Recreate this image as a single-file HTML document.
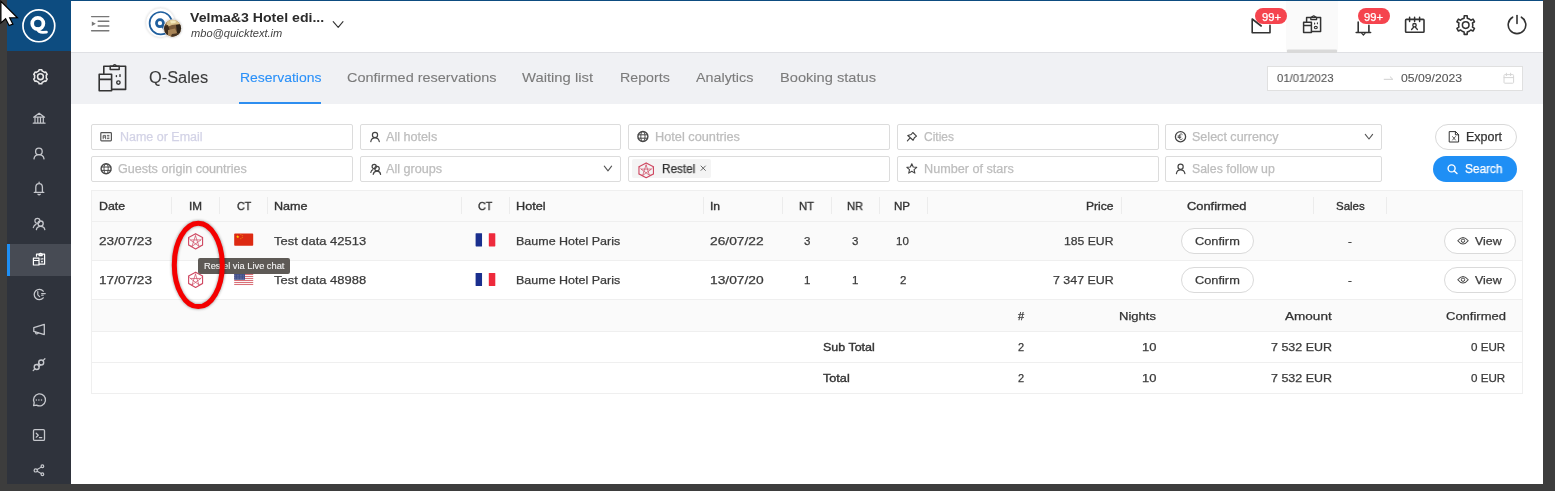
<!DOCTYPE html>
<html><head><meta charset="utf-8">
<style>
*{box-sizing:border-box;margin:0;padding:0}
html,body{width:1555px;height:491px;overflow:hidden}
body{position:relative;background:#3d3d3d;font-family:"Liberation Sans",sans-serif;color:#333}
.a{position:absolute}
.t{position:absolute;white-space:pre;line-height:1;will-change:transform}
svg{position:absolute;overflow:visible}
</style></head><body>
<div class="a" style="left:7px;top:0px;width:1536px;height:484px;background:#fff"></div>
<div class="a" style="left:7px;top:0px;width:64px;height:484px;background:#2f333c"></div>
<div class="a" style="left:7px;top:0px;width:64px;height:51px;background:#0d4c80"></div>
<div class="a" style="left:7px;top:244px;width:64px;height:32px;background:#474b54"></div>
<div class="a" style="left:7px;top:244px;width:3px;height:32px;background:#1e8ff5"></div>
<div class="a" style="left:71px;top:0px;width:1472px;height:1px;background:#0d4c80"></div>
<div class="a" style="left:71px;top:52px;width:1472px;height:1px;background:#dfe0e4"></div>
<div class="a" style="left:71px;top:53px;width:1472px;height:51px;background:#f0f1f4"></div>
<div class="a" style="left:239px;top:102px;width:82px;height:2px;background:#2e8ef0"></div>
<div class="a" style="left:1267px;top:66px;width:256px;height:25px;background:#fff;border:1px solid #e0e0e0"></div>
<div class="a" style="left:91px;top:124px;width:262px;height:26px;background:#fff;border:1px solid #dcdcdc;border-radius:2px"></div>
<div class="a" style="left:91px;top:156px;width:262px;height:26px;background:#fff;border:1px solid #dcdcdc;border-radius:2px"></div>
<div class="a" style="left:360px;top:124px;width:261px;height:26px;background:#fff;border:1px solid #dcdcdc;border-radius:2px"></div>
<div class="a" style="left:360px;top:156px;width:261px;height:26px;background:#fff;border:1px solid #dcdcdc;border-radius:2px"></div>
<div class="a" style="left:628px;top:124px;width:262px;height:26px;background:#fff;border:1px solid #dcdcdc;border-radius:2px"></div>
<div class="a" style="left:628px;top:156px;width:262px;height:26px;background:#fff;border:1px solid #dcdcdc;border-radius:2px"></div>
<div class="a" style="left:897px;top:124px;width:262px;height:26px;background:#fff;border:1px solid #dcdcdc;border-radius:2px"></div>
<div class="a" style="left:897px;top:156px;width:262px;height:26px;background:#fff;border:1px solid #dcdcdc;border-radius:2px"></div>
<div class="a" style="left:1165px;top:124px;width:217px;height:26px;background:#fff;border:1px solid #dcdcdc;border-radius:2px"></div>
<div class="a" style="left:1165px;top:156px;width:217px;height:26px;background:#fff;border:1px solid #dcdcdc;border-radius:2px"></div>
<div class="a" style="left:632px;top:159px;width:79px;height:19px;background:#f4f4f4;border-radius:2px"></div>
<div class="a" style="left:1435px;top:124px;width:82px;height:26px;background:#fff;border:1px solid #d9d9d9;border-radius:13px"></div>
<div class="a" style="left:1433px;top:156px;width:84px;height:26px;background:#1f8ff5;border-radius:13px"></div>
<div class="a" style="left:91px;top:190px;width:1432px;height:204px;background:#fff;border:1px solid #efefef"></div>
<div class="a" style="left:92px;top:191px;width:1430px;height:30px;background:#fafafa"></div>
<div class="a" style="left:92px;top:221px;width:1430px;height:39px;background:#fafafa"></div>
<div class="a" style="left:92px;top:221px;width:1430px;height:1px;background:#efefef"></div>
<div class="a" style="left:92px;top:260px;width:1430px;height:1px;background:#efefef"></div>
<div class="a" style="left:92px;top:299px;width:1430px;height:1px;background:#efefef"></div>
<div class="a" style="left:92px;top:300px;width:1430px;height:31px;background:#fafafa"></div>
<div class="a" style="left:92px;top:331px;width:1430px;height:1px;background:#efefef"></div>
<div class="a" style="left:92px;top:362px;width:1430px;height:1px;background:#efefef"></div>
<div class="a" style="left:171px;top:197px;width:1px;height:17px;background:#ececec"></div>
<div class="a" style="left:219px;top:197px;width:1px;height:17px;background:#ececec"></div>
<div class="a" style="left:267px;top:197px;width:1px;height:17px;background:#ececec"></div>
<div class="a" style="left:461px;top:197px;width:1px;height:17px;background:#ececec"></div>
<div class="a" style="left:509px;top:197px;width:1px;height:17px;background:#ececec"></div>
<div class="a" style="left:703px;top:197px;width:1px;height:17px;background:#ececec"></div>
<div class="a" style="left:782px;top:197px;width:1px;height:17px;background:#ececec"></div>
<div class="a" style="left:831px;top:197px;width:1px;height:17px;background:#ececec"></div>
<div class="a" style="left:879px;top:197px;width:1px;height:17px;background:#ececec"></div>
<div class="a" style="left:927px;top:197px;width:1px;height:17px;background:#ececec"></div>
<div class="a" style="left:1121px;top:197px;width:1px;height:17px;background:#ececec"></div>
<div class="a" style="left:1313px;top:197px;width:1px;height:17px;background:#ececec"></div>
<div class="a" style="left:1386px;top:197px;width:1px;height:17px;background:#ececec"></div>
<div class="a" style="left:1181px;top:228px;width:73px;height:26px;background:#fff;border:1px solid #dadada;border-radius:13px"></div>
<div class="a" style="left:1444px;top:228px;width:72px;height:26px;background:#fff;border:1px solid #dadada;border-radius:13px"></div>
<div class="a" style="left:1181px;top:267px;width:73px;height:26px;background:#fff;border:1px solid #dadada;border-radius:13px"></div>
<div class="a" style="left:1444px;top:267px;width:72px;height:26px;background:#fff;border:1px solid #dadada;border-radius:13px"></div>
<div class="t" style="left:190.00px;top:11.09px;font-size:13px;color:#2b2b2b;font-weight:700;transform:scaleX(1.0862);transform-origin:0 0;">Velma&amp;3 Hotel edi...</div>
<div class="t" style="left:190.50px;top:27.61px;font-size:10.5px;color:#444;font-style:italic;transform:scaleX(1.0551);transform-origin:0 0;">mbo@quicktext.im</div>
<div class="t" style="left:149.20px;top:69.65px;font-size:16px;color:#3a3a3a;transform:scaleX(1.0225);transform-origin:0 0;-webkit-text-stroke:0.1px #3a3a3a;">Q-Sales</div>
<div class="t" style="left:239.50px;top:71.37px;font-size:13.5px;color:#2a90f8;transform:scaleX(1.0343);transform-origin:0 0;-webkit-text-stroke:0.1px #2a90f8;">Reservations</div>
<div class="t" style="left:346.50px;top:71.37px;font-size:13.5px;color:#7b7b7b;transform:scaleX(1.0712);transform-origin:0 0;-webkit-text-stroke:0.1px #7b7b7b;">Confirmed reservations</div>
<div class="t" style="left:522.40px;top:71.37px;font-size:13.5px;color:#7b7b7b;transform:scaleX(1.0963);transform-origin:0 0;-webkit-text-stroke:0.1px #7b7b7b;">Waiting list</div>
<div class="t" style="left:620.00px;top:71.37px;font-size:13.5px;color:#7b7b7b;transform:scaleX(1.0533);transform-origin:0 0;-webkit-text-stroke:0.1px #7b7b7b;">Reports</div>
<div class="t" style="left:696.00px;top:71.37px;font-size:13.5px;color:#7b7b7b;transform:scaleX(1.0623);transform-origin:0 0;-webkit-text-stroke:0.1px #7b7b7b;">Analytics</div>
<div class="t" style="left:780.00px;top:71.37px;font-size:13.5px;color:#7b7b7b;transform:scaleX(1.0840);transform-origin:0 0;-webkit-text-stroke:0.1px #7b7b7b;">Booking status</div>
<div class="t" style="left:1276.50px;top:72.56px;font-size:11.5px;color:#555;transform:scaleX(0.9815);transform-origin:0 0;-webkit-text-stroke:0.1px #555;">01/01/2023</div>
<div class="t" style="left:1401.00px;top:72.56px;font-size:11.5px;color:#555;transform:scaleX(1.0597);transform-origin:0 0;-webkit-text-stroke:0.1px #555;">05/09/2023</div>
<div class="t" style="left:119.70px;top:131.14px;font-size:12px;color:#d3d3e6;transform:scaleX(1.0408);transform-origin:0 0;-webkit-text-stroke:0.25px #d3d3e6;">Name or Email</div>
<div class="t" style="left:386.10px;top:131.14px;font-size:12px;color:#bdbdbd;transform:scaleX(1.0513);transform-origin:0 0;-webkit-text-stroke:0.25px #bdbdbd;">All hotels</div>
<div class="t" style="left:655.20px;top:131.14px;font-size:12px;color:#bdbdbd;transform:scaleX(1.0619);transform-origin:0 0;-webkit-text-stroke:0.25px #bdbdbd;">Hotel countries</div>
<div class="t" style="left:923.50px;top:131.14px;font-size:12px;color:#bdbdbd;transform:scaleX(0.9961);transform-origin:0 0;-webkit-text-stroke:0.25px #bdbdbd;">Cities</div>
<div class="t" style="left:1191.60px;top:131.14px;font-size:12px;color:#bdbdbd;transform:scaleX(1.0459);transform-origin:0 0;-webkit-text-stroke:0.25px #bdbdbd;">Select currency</div>
<div class="t" style="left:118.10px;top:163.34px;font-size:12px;color:#bdbdbd;transform:scaleX(1.0494);transform-origin:0 0;-webkit-text-stroke:0.25px #bdbdbd;">Guests origin countries</div>
<div class="t" style="left:386.10px;top:163.34px;font-size:12px;color:#bdbdbd;transform:scaleX(1.0529);transform-origin:0 0;-webkit-text-stroke:0.25px #bdbdbd;">All groups</div>
<div class="t" style="left:662.00px;top:163.34px;font-size:12px;color:#333;transform:scaleX(0.9790);transform-origin:0 0;-webkit-text-stroke:0.25px #333;">Restel</div>
<div class="t" style="left:923.50px;top:163.34px;font-size:12px;color:#bdbdbd;transform:scaleX(1.0532);transform-origin:0 0;-webkit-text-stroke:0.25px #bdbdbd;">Number of stars</div>
<div class="t" style="left:1191.60px;top:163.34px;font-size:12px;color:#bdbdbd;transform:scaleX(1.0258);transform-origin:0 0;-webkit-text-stroke:0.25px #bdbdbd;">Sales follow up</div>
<div class="t" style="left:1466.20px;top:131.14px;font-size:12px;color:#333;transform:scaleX(1.0378);transform-origin:0 0;-webkit-text-stroke:0.25px #333;">Export</div>
<div class="t" style="left:1464.70px;top:163.34px;font-size:12px;color:#fff;transform:scaleX(0.9860);transform-origin:0 0;-webkit-text-stroke:0.25px #fff;">Search</div>
<div class="t" style="left:98.80px;top:200.56px;font-size:11.5px;color:#333;transform:scaleX(1.0742);transform-origin:0 0;-webkit-text-stroke:0.35px #333;">Date</div>
<div class="t" style="left:188.90px;top:200.56px;font-size:11.5px;color:#333;transform:scaleX(1.0171);transform-origin:0 0;-webkit-text-stroke:0.35px #333;">IM</div>
<div class="t" style="left:236.50px;top:200.56px;font-size:11.5px;color:#333;transform:scaleX(0.9320);transform-origin:0 0;-webkit-text-stroke:0.35px #333;">CT</div>
<div class="t" style="left:274.40px;top:200.56px;font-size:11.5px;color:#333;transform:scaleX(1.0949);transform-origin:0 0;-webkit-text-stroke:0.35px #333;">Name</div>
<div class="t" style="left:478.00px;top:200.56px;font-size:11.5px;color:#333;transform:scaleX(0.9385);transform-origin:0 0;-webkit-text-stroke:0.35px #333;">CT</div>
<div class="t" style="left:516.10px;top:200.56px;font-size:11.5px;color:#333;transform:scaleX(1.1020);transform-origin:0 0;-webkit-text-stroke:0.35px #333;">Hotel</div>
<div class="t" style="left:709.70px;top:200.56px;font-size:11.5px;color:#333;transform:scaleX(1.0528);transform-origin:0 0;-webkit-text-stroke:0.35px #333;">In</div>
<div class="t" style="left:799.30px;top:200.56px;font-size:11.5px;color:#333;transform:scaleX(0.9776);transform-origin:0 0;-webkit-text-stroke:0.35px #333;">NT</div>
<div class="t" style="left:846.85px;top:200.56px;font-size:11.5px;color:#333;transform:scaleX(0.9684);transform-origin:0 0;-webkit-text-stroke:0.35px #333;">NR</div>
<div class="t" style="left:894.45px;top:200.56px;font-size:11.5px;color:#333;transform:scaleX(1.0072);transform-origin:0 0;-webkit-text-stroke:0.35px #333;">NP</div>
<div class="t" style="left:1086.00px;top:200.56px;font-size:11.5px;color:#333;transform:scaleX(1.0495);transform-origin:0 0;-webkit-text-stroke:0.35px #333;">Price</div>
<div class="t" style="left:1187.40px;top:200.56px;font-size:11.5px;color:#333;transform:scaleX(1.1194);transform-origin:0 0;-webkit-text-stroke:0.35px #333;">Confirmed</div>
<div class="t" style="left:1335.90px;top:200.56px;font-size:11.5px;color:#333;-webkit-text-stroke:0.35px #333;">Sales</div>
<div class="t" style="left:98.80px;top:235.66px;font-size:11.5px;color:#3a3a3a;transform:scaleX(1.1839);transform-origin:0 0;-webkit-text-stroke:0.25px #3a3a3a;">23/07/23</div>
<div class="t" style="left:274.40px;top:235.66px;font-size:11.5px;color:#3a3a3a;transform:scaleX(1.1253);transform-origin:0 0;-webkit-text-stroke:0.25px #3a3a3a;">Test data 42513</div>
<div class="t" style="left:516.10px;top:235.66px;font-size:11.5px;color:#3a3a3a;transform:scaleX(1.0868);transform-origin:0 0;-webkit-text-stroke:0.25px #3a3a3a;">Baume Hotel Paris</div>
<div class="t" style="left:709.70px;top:235.66px;font-size:11.5px;color:#3a3a3a;transform:scaleX(1.1973);transform-origin:0 0;-webkit-text-stroke:0.25px #3a3a3a;">26/07/22</div>
<div class="t" style="left:803.60px;top:235.66px;font-size:11.5px;color:#3a3a3a;-webkit-text-stroke:0.25px #3a3a3a;">3</div>
<div class="t" style="left:851.70px;top:235.66px;font-size:11.5px;color:#3a3a3a;-webkit-text-stroke:0.25px #3a3a3a;">3</div>
<div class="t" style="left:896.40px;top:235.66px;font-size:11.5px;color:#3a3a3a;-webkit-text-stroke:0.25px #3a3a3a;">10</div>
<div class="t" style="left:1064.00px;top:235.66px;font-size:11.5px;color:#3a3a3a;transform:scaleX(1.0606);transform-origin:0 0;-webkit-text-stroke:0.25px #3a3a3a;">185 EUR</div>
<div class="t" style="left:1194.60px;top:235.66px;font-size:11.5px;color:#3a3a3a;transform:scaleX(1.1126);transform-origin:0 0;-webkit-text-stroke:0.25px #3a3a3a;">Confirm</div>
<div class="t" style="left:1348.08px;top:235.66px;font-size:11.5px;color:#3a3a3a;-webkit-text-stroke:0.25px #3a3a3a;">-</div>
<div class="t" style="left:1475.00px;top:235.66px;font-size:11.5px;color:#3a3a3a;transform:scaleX(1.0761);transform-origin:0 0;-webkit-text-stroke:0.25px #3a3a3a;">View</div>
<div class="t" style="left:98.80px;top:275.06px;font-size:11.5px;color:#3a3a3a;transform:scaleX(1.1839);transform-origin:0 0;-webkit-text-stroke:0.25px #3a3a3a;">17/07/23</div>
<div class="t" style="left:274.40px;top:275.06px;font-size:11.5px;color:#3a3a3a;transform:scaleX(1.1253);transform-origin:0 0;-webkit-text-stroke:0.25px #3a3a3a;">Test data 48988</div>
<div class="t" style="left:516.10px;top:275.06px;font-size:11.5px;color:#3a3a3a;transform:scaleX(1.0868);transform-origin:0 0;-webkit-text-stroke:0.25px #3a3a3a;">Baume Hotel Paris</div>
<div class="t" style="left:709.70px;top:275.06px;font-size:11.5px;color:#3a3a3a;transform:scaleX(1.1973);transform-origin:0 0;-webkit-text-stroke:0.25px #3a3a3a;">13/07/20</div>
<div class="t" style="left:803.60px;top:275.06px;font-size:11.5px;color:#3a3a3a;-webkit-text-stroke:0.25px #3a3a3a;">1</div>
<div class="t" style="left:851.70px;top:275.06px;font-size:11.5px;color:#3a3a3a;-webkit-text-stroke:0.25px #3a3a3a;">1</div>
<div class="t" style="left:899.60px;top:275.06px;font-size:11.5px;color:#3a3a3a;-webkit-text-stroke:0.25px #3a3a3a;">2</div>
<div class="t" style="left:1052.80px;top:275.06px;font-size:11.5px;color:#3a3a3a;transform:scaleX(1.0788);transform-origin:0 0;-webkit-text-stroke:0.25px #3a3a3a;">7 347 EUR</div>
<div class="t" style="left:1194.60px;top:275.06px;font-size:11.5px;color:#3a3a3a;transform:scaleX(1.1126);transform-origin:0 0;-webkit-text-stroke:0.25px #3a3a3a;">Confirm</div>
<div class="t" style="left:1348.08px;top:275.06px;font-size:11.5px;color:#3a3a3a;-webkit-text-stroke:0.25px #3a3a3a;">-</div>
<div class="t" style="left:1475.00px;top:275.06px;font-size:11.5px;color:#3a3a3a;transform:scaleX(1.0761);transform-origin:0 0;-webkit-text-stroke:0.25px #3a3a3a;">View</div>
<div class="t" style="left:1017.94px;top:311.39px;font-size:11px;color:#333;-webkit-text-stroke:0.25px #333;">#</div>
<div class="t" style="left:1118.90px;top:311.39px;font-size:11px;color:#333;transform:scaleX(1.1864);transform-origin:0 0;-webkit-text-stroke:0.25px #333;">Nights</div>
<div class="t" style="left:1285.30px;top:311.39px;font-size:11px;color:#333;transform:scaleX(1.2315);transform-origin:0 0;-webkit-text-stroke:0.25px #333;">Amount</div>
<div class="t" style="left:1445.70px;top:311.39px;font-size:11px;color:#333;transform:scaleX(1.1803);transform-origin:0 0;-webkit-text-stroke:0.25px #333;">Confirmed</div>
<div class="t" style="left:823.10px;top:342.19px;font-size:11px;color:#333;transform:scaleX(1.1342);transform-origin:0 0;-webkit-text-stroke:0.35px #333;">Sub Total</div>
<div class="t" style="left:1017.64px;top:342.19px;font-size:11px;color:#3a3a3a;-webkit-text-stroke:0.25px #3a3a3a;">2</div>
<div class="t" style="left:1141.50px;top:342.19px;font-size:11px;color:#3a3a3a;transform:scaleX(1.1755);transform-origin:0 0;-webkit-text-stroke:0.25px #3a3a3a;">10</div>
<div class="t" style="left:1271.00px;top:342.19px;font-size:11px;color:#3a3a3a;transform:scaleX(1.1336);transform-origin:0 0;-webkit-text-stroke:0.25px #3a3a3a;">7 532 EUR</div>
<div class="t" style="left:1471.40px;top:342.19px;font-size:11px;color:#3a3a3a;transform:scaleX(1.0554);transform-origin:0 0;-webkit-text-stroke:0.25px #3a3a3a;">0 EUR</div>
<div class="t" style="left:823.10px;top:373.49px;font-size:11px;color:#333;transform:scaleX(1.1484);transform-origin:0 0;-webkit-text-stroke:0.35px #333;">Total</div>
<div class="t" style="left:1017.64px;top:373.49px;font-size:11px;color:#3a3a3a;-webkit-text-stroke:0.25px #3a3a3a;">2</div>
<div class="t" style="left:1141.50px;top:373.49px;font-size:11px;color:#3a3a3a;transform:scaleX(1.1755);transform-origin:0 0;-webkit-text-stroke:0.25px #3a3a3a;">10</div>
<div class="t" style="left:1271.00px;top:373.49px;font-size:11px;color:#3a3a3a;transform:scaleX(1.1336);transform-origin:0 0;-webkit-text-stroke:0.25px #3a3a3a;">7 532 EUR</div>
<div class="t" style="left:1471.40px;top:373.49px;font-size:11px;color:#3a3a3a;transform:scaleX(1.0554);transform-origin:0 0;-webkit-text-stroke:0.25px #3a3a3a;">0 EUR</div>
<svg style="left:0;top:0" width="1555" height="491"><circle cx="38.85" cy="25.85" r="15.9" fill="none" stroke="#fff" stroke-width="1.7"/><circle cx="37.8" cy="23.4" r="5.6" fill="none" stroke="#fff" stroke-width="3.7"/><path d="M37.2 28.8 Q38.6 32.4 42.8 32.4 L46.4 32.1" fill="none" stroke="#fff" stroke-width="2.9" stroke-linecap="round" stroke-linejoin="round" /><path d="M37.50 71.59 L38.73 71.06 L39.10 69.73 L41.80 69.73 L42.17 71.06 L43.40 71.59 L44.47 72.39 L45.81 72.04 L47.16 74.39 L46.20 75.37 L46.35 76.70 L46.20 78.03 L47.16 79.01 L45.81 81.36 L44.47 81.01 L43.40 81.81 L42.17 82.34 L41.80 83.67 L39.10 83.67 L38.73 82.34 L37.50 81.81 L36.43 81.01 L35.09 81.36 L33.74 79.01 L34.70 78.03 L34.55 76.70 L34.70 75.37 L33.74 74.39 L35.09 72.04 L36.43 72.39 Z" fill="none" stroke="#e8e8e8" stroke-width="1.55" stroke-linecap="round" stroke-linejoin="round" /><circle cx="40.45" cy="76.7" r="2.9" fill="none" stroke="#e8e8e8" stroke-width="1.55"/><path d="M33.6 117.2 L39.1 113.2 L44.6 117.2 Z" fill="none" stroke="#c5c7cc" stroke-width="1.2" stroke-linecap="round" stroke-linejoin="round" /><path d="M35 117.5 V122.5 M37.8 117.5 V122.5 M40.5 117.5 V122.5 M43.3 117.5 V122.5" fill="none" stroke="#c5c7cc" stroke-width="1.2" stroke-linecap="round" stroke-linejoin="round" /><path d="M33.3 123.2 H45" fill="none" stroke="#c5c7cc" stroke-width="1.3" stroke-linecap="round" stroke-linejoin="round" /><circle cx="38.9" cy="151.4" r="3.3" fill="none" stroke="#c5c7cc" stroke-width="1.3"/><path d="M34 158.8 Q34.5 154.7 38.9 154.7 Q43.3 154.7 44 158.8" fill="none" stroke="#c5c7cc" stroke-width="1.3" stroke-linecap="round" stroke-linejoin="round" /><path d="M35.8 192.3 V187.3 Q35.8 183.6 39.1 183.6 Q42.4 183.6 42.4 187.3 V192.3 M34.3 192.4 H43.8 M38 194.2 Q39.1 195.3 40.2 194.2 M39.1 182.2 V183.3" fill="none" stroke="#c5c7cc" stroke-width="1.3" stroke-linecap="round" stroke-linejoin="round" /><circle cx="37.4" cy="220.8" r="2.5" fill="none" stroke="#c5c7cc" stroke-width="1.2"/><circle cx="40.6" cy="223.6" r="2.6" fill="none" stroke="#c5c7cc" stroke-width="1.3"/><path d="M33.3 227.6 Q34 225 36 224.4" fill="none" stroke="#c5c7cc" stroke-width="1.2" stroke-linecap="round" stroke-linejoin="round" /><path d="M36.4 229.6 Q37 226.4 40.6 226.4 Q44.2 226.4 44.8 229.6" fill="none" stroke="#c5c7cc" stroke-width="1.3" stroke-linecap="round" stroke-linejoin="round" /><path d="M36.5 256.2 V254.2 H44.6 V264.2 H39.2" fill="none" stroke="#ffffff" stroke-width="1.2" stroke-linecap="round" stroke-linejoin="round" /><path d="M39 254.2 V255.6 H42.2 V254.2 L40.6 253.2 Z" fill="none" stroke="#ffffff" stroke-width="1.1" stroke-linecap="round" stroke-linejoin="round" /><path d="M33.4 258.2 H39 V265 H33.4 Z M33.4 260.5 H39" fill="none" stroke="#ffffff" stroke-width="1.2" stroke-linecap="round" stroke-linejoin="round" /><path d="M41.2 258.6 V259.4 M42.8 258.4 V259.2" fill="none" stroke="#ffffff" stroke-width="1" stroke-linecap="round" stroke-linejoin="round" /><circle cx="42" cy="261.6" r="0.9" fill="#ffffff"/><path d="M43.2 291.2 A5.1 5.1 0 1 0 43.2 297.8" fill="none" stroke="#c5c7cc" stroke-width="1.3" stroke-linecap="round" stroke-linejoin="round" /><path d="M37.8 291.6 V294.8 L39.6 296.6" fill="none" stroke="#c5c7cc" stroke-width="1.2" stroke-linecap="round" stroke-linejoin="round" /><path d="M41.6 293.6 H45.3 M41.6 295.3 H43.2" fill="none" stroke="#c5c7cc" stroke-width="1.1" stroke-linecap="round" stroke-linejoin="round" /><path d="M33.8 327.6 L44.3 324.3 V334.6 L33.8 331.4 Z" fill="none" stroke="#c5c7cc" stroke-width="1.3" stroke-linecap="round" stroke-linejoin="round" /><path d="M35.6 332 A1.4 1.4 0 1 0 38.3 332.6" fill="none" stroke="#c5c7cc" stroke-width="1.2" stroke-linecap="round" stroke-linejoin="round" /><circle cx="36.7" cy="367.0" r="2.5" fill="none" stroke="#c5c7cc" stroke-width="1.35"/><circle cx="41.2" cy="362.5" r="2.5" fill="none" stroke="#c5c7cc" stroke-width="1.35"/><path d="M33.2 370.6 L35 368.8 M43 360.6 L44.9 358.8 M37.6 364.6 L39 363.2 M38.8 366.6 L40.6 364.8" fill="none" stroke="#c5c7cc" stroke-width="1.3" stroke-linecap="round" stroke-linejoin="round" /><path d="M33.6 405.6 L34.2 402.6 A6 6 0 1 1 36.6 405.1 Z" fill="none" stroke="#c5c7cc" stroke-width="1.3" stroke-linecap="round" stroke-linejoin="round" /><circle cx="36.3" cy="400" r=".75" fill="#c5c7cc"/><circle cx="38.9" cy="400" r=".75" fill="#c5c7cc"/><circle cx="41.5" cy="400" r=".75" fill="#c5c7cc"/><rect x="33.5" y="429.6" width="11" height="10.8" rx="1.2" fill="none" stroke="#c5c7cc" stroke-width="1.3"/><path d="M36.2 433.2 L38.3 435.2 L36.2 437.2 M39.4 437.6 H41.8" fill="none" stroke="#c5c7cc" stroke-width="1.2" stroke-linecap="round" stroke-linejoin="round" /><circle cx="35.7" cy="470.4" r="1.6" fill="none" stroke="#c5c7cc" stroke-width="1.2"/><circle cx="42.4" cy="466.3" r="1.35" fill="none" stroke="#c5c7cc" stroke-width="1.2"/><circle cx="42.4" cy="474.3" r="1.35" fill="none" stroke="#c5c7cc" stroke-width="1.2"/><path d="M37.2 469.5 L41.2 467.1 M37.2 471.3 L41.2 473.5" fill="none" stroke="#c5c7cc" stroke-width="1.1" stroke-linecap="round" stroke-linejoin="round" /><path d="M91.6 16.6 H108.8 M98.2 21.3 H108.8 M98.2 25.9 H108.8 M91.6 30.7 H108.8" fill="none" stroke="#777" stroke-width="1.45" stroke-linecap="round" stroke-linejoin="round" stroke-linecap="butt"/><path d="M91.8 21.4 L95.8 23.7 L91.8 26 Z" fill="#777"/><circle cx="160.5" cy="22.7" r="14.6" fill="#fff" stroke="#ececec" stroke-width=".7" style="filter:drop-shadow(0 0 1.2px rgba(0,0,0,.15))"/><circle cx="160.75" cy="23.15" r="11.15" fill="none" stroke="#1f5f9e" stroke-width="1.7"/><circle cx="159.95" cy="23.2" r="3.5" fill="none" stroke="#1f5f9e" stroke-width="2.7"/><path d="M161.2 26.2 L163.4 30 L163.8 25.6 Z" fill="#1f5f9e"/><defs><clipPath id="pc"><circle cx="172.55" cy="28.15" r="8.5"/></clipPath></defs><circle cx="172.55" cy="28.15" r="9" fill="#fff" style="filter:drop-shadow(0 0 1.2px rgba(0,0,0,.3))"/><g clip-path="url(#pc)"><rect x="163" y="19" width="19" height="19" fill="#7a5a38"/><path d="M166 20 L178 19.5 L180 24 L172 25 L167 27 Z" fill="#d8c08a"/><path d="M170 20.5 L176 20.5 L175.5 23 L171 23.5 Z" fill="#f2e6b8"/><path d="M163 26 L168 25 L170 31 L166 37 L163 37 Z" fill="#3e2c1c"/><path d="M176 25 L182 24 L182 35 L177 33 Z" fill="#2e2418"/><path d="M168 30 L175 28.5 L177 33 L171 37 L168 35 Z" fill="#a88456"/><path d="M172 34 L180 33 L179 38 L170 38 Z" fill="#4a3622"/></g><path d="M333.2 21.6 L338.2 27.4 L343 21.6" fill="none" stroke="#333" stroke-width="1.1" stroke-linecap="round" stroke-linejoin="round" /><rect x="1286" y="1" width="52" height="51" fill="#fafafa"/><rect x="1287" y="49.6" width="50" height="3.4" rx="1" fill="#d9d9d9"/><path d="M1252.2 19 V32.8 H1270 V25.2 M1252.2 19 L1261.2 26" fill="none" stroke="#333" stroke-width="1.6" stroke-linecap="round" stroke-linejoin="round" stroke-linecap="butt" stroke-linejoin="miter"/><path d="M1306.6 21.5 V17.6 H1320.6 V31.6 H1311.6" fill="none" stroke="#333" stroke-width="1.5" stroke-linecap="round" stroke-linejoin="round" /><path d="M1310.8 17.6 V19.6 H1316.6 V17.6 L1313.7 15.8 Z" fill="none" stroke="#333" stroke-width="1.3" stroke-linecap="round" stroke-linejoin="round" /><path d="M1303.6 22.3 H1311.4 V32.6 H1303.6 Z M1303.6 25.6 H1311.4" fill="none" stroke="#333" stroke-width="1.5" stroke-linecap="round" stroke-linejoin="round" /><path d="M1314.6 23 V24 M1317.4 22.8 V23.8" fill="none" stroke="#333" stroke-width="1.1" stroke-linecap="round" stroke-linejoin="round" /><ellipse cx="1315.8" cy="27.6" rx="1.5" ry="1.2" fill="none" stroke="#333" stroke-width="1.1"/><path d="M1358.2 22 V32.4 M1368.9 25.4 V32.4 M1356.2 32.5 H1370.6" fill="none" stroke="#333" stroke-width="1.6" stroke-linecap="round" stroke-linejoin="round" stroke-linecap="butt"/><path d="M1361.8 33.4 L1363.4 35 L1365 33.4" fill="none" stroke="#333" stroke-width="1.2" stroke-linecap="round" stroke-linejoin="round" /><rect x="1405.6" y="19.4" width="18.4" height="12.8" rx=".8" fill="none" stroke="#333" stroke-width="1.6"/><path d="M1409.6 17.2 V21.4 M1414.6 17.2 V21.4 M1419.6 17.2 V21.4" fill="none" stroke="#333" stroke-width="1.5" stroke-linecap="round" stroke-linejoin="round" /><circle cx="1414.5" cy="25.2" r="1.7" fill="none" stroke="#333" stroke-width="1.3"/><path d="M1411.6 29.5 L1413.6 27.2 M1417.4 29.5 L1415.4 27.2" fill="none" stroke="#333" stroke-width="1.3" stroke-linecap="round" stroke-linejoin="round" /><path d="M1462.15 18.95 L1464.10 18.18 L1464.23 15.82 L1467.17 15.82 L1467.30 18.18 L1469.25 18.95 L1470.89 20.26 L1473.01 19.18 L1474.48 21.73 L1472.49 23.02 L1472.80 25.10 L1472.49 27.18 L1474.48 28.47 L1473.01 31.02 L1470.89 29.94 L1469.25 31.25 L1467.30 32.02 L1467.17 34.38 L1464.23 34.38 L1464.10 32.02 L1462.15 31.25 L1460.51 29.94 L1458.39 31.02 L1456.92 28.47 L1458.91 27.18 L1458.60 25.10 L1458.91 23.02 L1456.92 21.73 L1458.39 19.18 L1460.51 20.26 Z" fill="none" stroke="#333" stroke-width="1.55" stroke-linecap="round" stroke-linejoin="round" /><circle cx="1465.7" cy="25.1" r="3.3" fill="none" stroke="#333" stroke-width="1.55"/><path d="M1512.6 17.2 A8.8 8.8 0 1 0 1521.4 17.2" fill="none" stroke="#333" stroke-width="1.6" stroke-linecap="round" stroke-linejoin="round" /><path d="M1517 15.6 V23.4" fill="none" stroke="#333" stroke-width="1.6" stroke-linecap="round" stroke-linejoin="round" /><path d="M103.8 73.4 V66.3 H125.6 V89.4 H112.2" fill="none" stroke="#333" stroke-width="1.6" stroke-linecap="round" stroke-linejoin="round" /><path d="M110.2 66.3 V69.6 H119.2 V66.3 L116.6 66.3 Q114.7 63 112.8 66.3 Z" fill="none" stroke="#333" stroke-width="1.5" stroke-linecap="round" stroke-linejoin="round" /><path d="M99.2 74.2 H111.6 V90.8 H99.2 Z M99.2 79.4 H111.6" fill="none" stroke="#333" stroke-width="1.6" stroke-linecap="round" stroke-linejoin="round" /><path d="M116.4 75.6 V76.6 M120 74.6 V76.4" fill="none" stroke="#333" stroke-width="1.4" stroke-linecap="round" stroke-linejoin="round" /><circle cx="118.4" cy="82.6" r="1.7" fill="none" stroke="#333" stroke-width="1.4"/><path d="M1384.2 79.3 H1392.8 L1390.2 76.8" fill="none" stroke="#cfcfcf" stroke-width="1" stroke-linecap="round" stroke-linejoin="round" /><rect x="1504" y="74.6" width="9.6" height="8.6" rx=".8" fill="none" stroke="#d6d6d6" stroke-width="1"/><path d="M1504 77.6 H1513.6 M1506.4 73.2 V75.6 M1510.6 73.2 V75.6" fill="none" stroke="#d6d6d6" stroke-width="1" stroke-linecap="round" stroke-linejoin="round" /><rect x="100.8" y="132.6" width="10.6" height="8.2" rx=".8" fill="none" stroke="#555" stroke-width="1.2"/><path d="M103.2 138.8 V135.4 H105.6 V138.8 M103.2 137 H105.6 M107.3 135.4 H109 M107.6 137 H109 M107.3 138.6 H109" fill="none" stroke="#555" stroke-width="0.9" stroke-linecap="round" stroke-linejoin="round" /><circle cx="375" cy="134.9" r="2.6" fill="none" stroke="#444" stroke-width="1.2"/><path d="M370.8 141.6 Q371.4 137.8 375 137.8 Q378.6 137.8 379.3 141.6" fill="none" stroke="#444" stroke-width="1.2" stroke-linecap="round" stroke-linejoin="round" /><circle cx="106.1" cy="168.7" r="5.0" fill="#fff" stroke="#484848" stroke-width="1.4"/><ellipse cx="106.1" cy="168.7" rx="2.1" ry="4.9" fill="none" stroke="#484848" stroke-width="1"/><path d="M101.40 167.00 H110.80 M101.40 170.40 H110.80" fill="none" stroke="#484848" stroke-width="1" stroke-linecap="round" stroke-linejoin="round" stroke-linecap="butt"/><circle cx="642.9" cy="136.5" r="5.0" fill="#fff" stroke="#484848" stroke-width="1.4"/><ellipse cx="642.9" cy="136.5" rx="2.1" ry="4.9" fill="none" stroke="#484848" stroke-width="1"/><path d="M638.20 134.80 H647.60 M638.20 138.20 H647.60" fill="none" stroke="#484848" stroke-width="1" stroke-linecap="round" stroke-linejoin="round" stroke-linecap="butt"/><circle cx="374.2" cy="166.4" r="2.1" fill="none" stroke="#444" stroke-width="1.2"/><circle cx="377" cy="168.6" r="2.3" fill="none" stroke="#444" stroke-width="1.2"/><path d="M370.8 172.5 Q371.2 170.2 373 169.6" fill="none" stroke="#444" stroke-width="1.2" stroke-linecap="round" stroke-linejoin="round" /><path d="M373.2 174.3 Q373.8 171.2 377 171.2 Q380.2 171.2 380.6 174.3" fill="none" stroke="#444" stroke-width="1.2" stroke-linecap="round" stroke-linejoin="round" /><path d="M604.3 166.2 L608 170.8 L611.6 166.2" fill="none" stroke="#555" stroke-width="1.1" stroke-linecap="round" stroke-linejoin="round" /><path d="M1365.3 134.4 L1369 139 L1372.6 134.4" fill="none" stroke="#555" stroke-width="1.1" stroke-linecap="round" stroke-linejoin="round" /><path d="M907.8 135.5 L911.2 134.5 L912.8 132.5 L916.5 136.1 L914.4 137.7 L913.1 140.3 Z M909.9 138.1 L907.4 140.9" fill="none" stroke="#444" stroke-width="1.15" stroke-linecap="round" stroke-linejoin="round" /><path d="M911.80 163.70 L913.21 166.96 L916.75 167.29 L914.08 169.64 L914.86 173.11 L911.80 171.30 L908.74 173.11 L909.52 169.64 L906.85 167.29 L910.39 166.96 Z" fill="none" stroke="#444" stroke-width="1.1" stroke-linecap="round" stroke-linejoin="round" /><circle cx="1180.5" cy="136.7" r="5.1" fill="none" stroke="#444" stroke-width="1.3"/><path d="M1182.2 134.4 Q1181.6 133.8 1180.9 133.9 Q1179 134.2 1179 136.7 Q1179 139.3 1180.9 139.5 Q1181.6 139.6 1182.2 139 M1178 136 H1180.8 M1178 137.4 H1180.8" fill="none" stroke="#444" stroke-width="0.9" stroke-linecap="round" stroke-linejoin="round" /><circle cx="1180.6" cy="166.8" r="2.6" fill="none" stroke="#444" stroke-width="1.2"/><path d="M1176.4 173.6 Q1177 169.8 1180.6 169.8 Q1184.2 169.8 1184.9 173.6" fill="none" stroke="#444" stroke-width="1.2" stroke-linecap="round" stroke-linejoin="round" /><path d="M646.20 163.00 L653.44 166.70 L653.44 174.10 L646.20 177.80 L638.96 174.10 L638.96 166.70 Z" fill="none" stroke="#cf4660" stroke-width="1.1" stroke-linecap="round" stroke-linejoin="round" /><path d="M646.20 165.29 L649.42 175.20 L640.99 169.08 L651.41 169.08 L642.98 175.20 Z" fill="none" stroke="#cf4660" stroke-width="0.7" stroke-linecap="round" stroke-linejoin="round" /><path d="M646.20 165.29 L646.20 163.00" fill="none" stroke="#cf4660" stroke-width="0.55" stroke-linecap="round" stroke-linejoin="round" opacity=".75"/><path d="M651.41 169.08 L653.44 166.70" fill="none" stroke="#cf4660" stroke-width="0.55" stroke-linecap="round" stroke-linejoin="round" opacity=".75"/><path d="M649.42 175.20 L653.44 174.10" fill="none" stroke="#cf4660" stroke-width="0.55" stroke-linecap="round" stroke-linejoin="round" opacity=".75"/><path d="M642.98 175.20 L638.96 174.10" fill="none" stroke="#cf4660" stroke-width="0.55" stroke-linecap="round" stroke-linejoin="round" opacity=".75"/><path d="M640.99 169.08 L638.96 166.70" fill="none" stroke="#cf4660" stroke-width="0.55" stroke-linecap="round" stroke-linejoin="round" opacity=".75"/><path d="M701 166 L705.4 170.4 M705.4 166 L701 170.4" fill="none" stroke="#555" stroke-width="0.9" stroke-linecap="round" stroke-linejoin="round" /><path d="M1449.6 131.6 H1455.6 L1458.6 134.6 V142 H1449.6 Z M1455.4 131.6 V134.8 H1458.6" fill="none" stroke="#333" stroke-width="1.0" stroke-linecap="round" stroke-linejoin="round" /><path d="M1452.6 136.6 L1455.4 140 M1455.4 136.6 L1452.6 140" fill="none" stroke="#333" stroke-width="0.8" stroke-linecap="round" stroke-linejoin="round" /><circle cx="1451.6" cy="168.4" r="3.5" fill="none" stroke="#fff" stroke-width="1.4"/><path d="M1454.2 171 L1457 173.6" fill="none" stroke="#fff" stroke-width="1.4" stroke-linecap="round" stroke-linejoin="round" /><path d="M195.60 233.70 L202.58 237.50 L202.58 245.10 L195.60 248.90 L188.62 245.10 L188.62 237.50 Z" fill="none" stroke="#cf4660" stroke-width="1.1" stroke-linecap="round" stroke-linejoin="round" /><path d="M195.60 236.06 L198.91 246.23 L190.25 239.94 L200.95 239.94 L192.29 246.23 Z" fill="none" stroke="#cf4660" stroke-width="0.7" stroke-linecap="round" stroke-linejoin="round" /><path d="M195.60 236.06 L195.60 233.70" fill="none" stroke="#cf4660" stroke-width="0.55" stroke-linecap="round" stroke-linejoin="round" opacity=".75"/><path d="M200.95 239.94 L202.58 237.50" fill="none" stroke="#cf4660" stroke-width="0.55" stroke-linecap="round" stroke-linejoin="round" opacity=".75"/><path d="M198.91 246.23 L202.58 245.10" fill="none" stroke="#cf4660" stroke-width="0.55" stroke-linecap="round" stroke-linejoin="round" opacity=".75"/><path d="M192.29 246.23 L188.62 245.10" fill="none" stroke="#cf4660" stroke-width="0.55" stroke-linecap="round" stroke-linejoin="round" opacity=".75"/><path d="M190.25 239.94 L188.62 237.50" fill="none" stroke="#cf4660" stroke-width="0.55" stroke-linecap="round" stroke-linejoin="round" opacity=".75"/><path d="M195.60 272.20 L202.58 276.00 L202.58 283.60 L195.60 287.40 L188.62 283.60 L188.62 276.00 Z" fill="none" stroke="#cf4660" stroke-width="1.1" stroke-linecap="round" stroke-linejoin="round" /><path d="M195.60 274.56 L198.91 284.73 L190.25 278.44 L200.95 278.44 L192.29 284.73 Z" fill="none" stroke="#cf4660" stroke-width="0.7" stroke-linecap="round" stroke-linejoin="round" /><path d="M195.60 274.56 L195.60 272.20" fill="none" stroke="#cf4660" stroke-width="0.55" stroke-linecap="round" stroke-linejoin="round" opacity=".75"/><path d="M200.95 278.44 L202.58 276.00" fill="none" stroke="#cf4660" stroke-width="0.55" stroke-linecap="round" stroke-linejoin="round" opacity=".75"/><path d="M198.91 284.73 L202.58 283.60" fill="none" stroke="#cf4660" stroke-width="0.55" stroke-linecap="round" stroke-linejoin="round" opacity=".75"/><path d="M192.29 284.73 L188.62 283.60" fill="none" stroke="#cf4660" stroke-width="0.55" stroke-linecap="round" stroke-linejoin="round" opacity=".75"/><path d="M190.25 278.44 L188.62 276.00" fill="none" stroke="#cf4660" stroke-width="0.55" stroke-linecap="round" stroke-linejoin="round" opacity=".75"/><rect x="234.2" y="233.6" width="19" height="12.2" rx=".8" fill="#dd2a12"/><path d="M237.70 235.10 L238.11 236.23 L239.32 236.27 L238.37 237.02 L238.70 238.18 L237.70 237.50 L236.70 238.18 L237.03 237.02 L236.08 236.27 L237.29 236.23 Z" fill="#ffde00"/><circle cx="240.9" cy="234.6" r=".45" fill="#ffde00"/><circle cx="242.2" cy="235.8" r=".45" fill="#ffde00"/><circle cx="242.2" cy="237.4" r=".45" fill="#ffde00"/><circle cx="240.9" cy="238.8" r=".45" fill="#ffde00"/><rect x="234.2" y="273.8" width="19" height="11.6" fill="#fbf5f5"/><rect x="234.2" y="274" width="19" height="1" fill="#d45862" opacity=".85"/><rect x="234.2" y="276" width="19" height="1" fill="#d45862" opacity=".85"/><rect x="234.2" y="278" width="19" height="1" fill="#d45862" opacity=".85"/><rect x="234.2" y="280" width="19" height="1" fill="#d45862" opacity=".85"/><rect x="234.2" y="282" width="19" height="1" fill="#d45862" opacity=".85"/><rect x="234.2" y="284" width="19" height="1" fill="#d45862" opacity=".85"/><rect x="234.2" y="273.8" width="10.8" height="6" fill="#42508a"/><path d="M235.5 275.3 H243.8 M235.5 277.1 H243.8 M235.5 278.8 H243.8" stroke="#c8cde0" stroke-width=".45" stroke-dasharray=".6 .9" opacity=".8"/><rect x="475.6" y="233.2" width="6.6" height="13.2" rx=".6" fill="#1a2f8e"/><rect x="482.2" y="233.2" width="6.6" height="13.2" fill="#fff"/><rect x="488.8" y="233.2" width="6.5" height="13.2" rx=".6" fill="#ee2a3c"/><rect x="475.6" y="272.9" width="6.6" height="13.2" rx=".6" fill="#1a2f8e"/><rect x="482.2" y="272.9" width="6.6" height="13.2" fill="#fff"/><rect x="488.8" y="272.9" width="6.5" height="13.2" rx=".6" fill="#ee2a3c"/><path d="M1457.8 240.7 Q1463 234.1 1468.2 240.7 Q1463 247.29999999999998 1457.8 240.7 Z" fill="none" stroke="#444" stroke-width="1.05" stroke-linecap="round" stroke-linejoin="round" /><circle cx="1463" cy="240.7" r="1.7" fill="none" stroke="#444" stroke-width="1"/><path d="M1457.8 279.7 Q1463 273.09999999999997 1468.2 279.7 Q1463 286.3 1457.8 279.7 Z" fill="none" stroke="#444" stroke-width="1.05" stroke-linecap="round" stroke-linejoin="round" /><circle cx="1463" cy="279.7" r="1.7" fill="none" stroke="#444" stroke-width="1"/></svg>
<div class="a" style="left:1255px;top:8px;width:32px;height:16px;background:#f5444e;border-radius:8px"></div>
<div class="a" style="left:1357.5px;top:8px;width:32.0px;height:16px;background:#f5444e;border-radius:8px"></div>
<div class="t" style="left:1261.50px;top:12.11px;font-size:10.5px;color:#fff;transform:scaleX(1.0667);transform-origin:0 0;-webkit-text-stroke:0.25px #fff;">99+</div>
<div class="t" style="left:1364.00px;top:12.11px;font-size:10.5px;color:#fff;transform:scaleX(1.0667);transform-origin:0 0;-webkit-text-stroke:0.25px #fff;">99+</div>
<div class="a" style="left:198.3px;top:258px;width:91.69999999999999px;height:15.600000000000023px;background:#5e5a56;border-radius:2px"></div>
<div class="t" style="left:204.00px;top:261.98px;font-size:9px;color:#f4f4f4;transform:scaleX(1.0302);transform-origin:0 0;-webkit-text-stroke:0.12px #f4f4f4;">Restel via Live chat</div>
<svg style="left:0;top:0" width="1555" height="491"><ellipse cx="198.3" cy="264.9" rx="24" ry="41.7" fill="none" stroke="#f40000" stroke-width="5" style="filter:drop-shadow(0 0 1.5px rgba(0,0,0,.45))"/></svg>
<svg style="left:0;top:0" width="30" height="30"><path d="M0.9 1.4 L0.9 22.9 L5.6 18.7 L9.1 25.6 L12.9 24.1 L9.7 17.9 L17.4 17.7 Z" fill="#fff" stroke="#000" stroke-width="1.2" stroke-linejoin="miter"/></svg>
</body></html>
